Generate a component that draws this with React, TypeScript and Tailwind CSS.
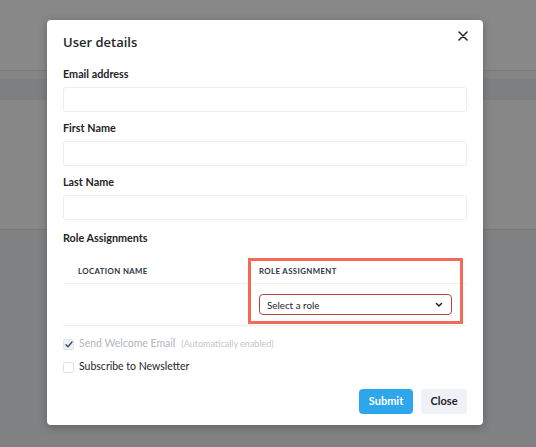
import React from 'react';

const font = { fontFamily: 'Lato, "Open Sans", sans-serif' };

function Field({ label }: { label: string }) {
  return (
    <div className="flex flex-col">
      <label className="text-[10.8px] font-bold text-[#1f2328] leading-[14px] mb-[6px]">{label}</label>
      <input className="h-[25px] w-full rounded-[3px] border border-[#eceef0] bg-white outline-none" />
    </div>
  );
}

export default function App() {
  return (
    <div className="relative h-[447px] w-[536px] overflow-hidden bg-[#868686]" style={font}>
      {/* page behind the overlay */}
      <div className="flex flex-col">
        <div className="h-[70px] bg-[#888888]" />
        <div className="h-px bg-[#7b7b7b]" />
        <div className="h-[8px] bg-[#858585]" />
        <div className="h-[21px] bg-[#7e7f81]" />
        <div className="h-[129px] bg-[#878787]" />
        <div className="h-px bg-[#777777]" />
        <div className="h-[217px] bg-[#808183]" />
      </div>

      {/* modal */}
      <div className="absolute left-[47px] top-[20px] w-[436px] h-[405px] rounded-[4px] bg-white px-[16px] shadow-[0_2px_8px_rgba(0,0,0,0.25)]">
        <div className="flex items-start justify-between pt-[12px]">
          <h2 className="text-[13px] font-semibold text-[#22262b] leading-[20px]" style={{ fontFamily: '"Open Sans", sans-serif' }}>User details</h2>
          <svg className="mt-[-1px] mr-[-1px]" width="10" height="10" viewBox="0 0 10 10" fill="none" stroke="#1f2328" strokeWidth="1.5" strokeLinecap="round">
            <path d="M1 1l8 8M9 1l-8 8" />
          </svg>
        </div>

        <div className="mt-[15px] flex flex-col gap-[9px]">
          <Field label="Email address" />
          <Field label="First Name" />
          <Field label="Last Name" />
        </div>

        <h3 className="mt-[11px] text-[10.8px] font-bold text-[#1f2328] leading-[14px]">Role Assignments</h3>

        <div className="mt-[11px]">
          <div className="grid grid-cols-[185px_1fr] border-b border-[#f0f1f3]">
            <div className="pl-[15px] pt-[9px] pb-[6px] text-[7.8px] leading-[12px] font-bold tracking-[0.05em] text-[#2b3444]">LOCATION NAME</div>
            <div className="pl-[11px] pt-[9px] pb-[6px] text-[7.8px] leading-[12px] font-bold tracking-[0.05em] text-[#2b3444]">ROLE ASSIGNMENT</div>
          </div>
          <div className="grid grid-cols-[185px_1fr] border-b border-[#f0f1f3]">
            <div />
            <div className="pl-[11px] pr-[15px] pt-[10px] pb-[10px]">
              <div className="flex h-[21px] shrink-0 items-center justify-between rounded-[4px] border-[1.5px] border-[#b1473f] pl-[7px] pr-[8px]">
                <span className="text-[9.8px] leading-[12px] text-[#1f2328]">Select a role</span>
                <svg width="8" height="6" viewBox="0 0 8 6" fill="none" stroke="#1f2328" strokeWidth="1.5" strokeLinecap="round" strokeLinejoin="round">
                  <path d="M1.5 1.5L4 4l2.5-2.5" />
                </svg>
              </div>
            </div>
          </div>
        </div>

        {/* highlight overlay */}
        <div className="pointer-events-none absolute left-[201px] top-[238px] h-[66px] w-[215px] border-[3px] border-[#f26a58]" />

        <div className="mt-[11px] flex flex-col gap-[9px]">
          <label className="flex h-[14px] items-center gap-[5px]">
            <span className="flex h-[11px] w-[11px] items-center justify-center rounded-[2px] border border-[#e2e5ea] bg-[#eef0f4]">
              <svg width="8" height="7" viewBox="0 0 8 7" fill="none" stroke="#3b4a66" strokeWidth="1.3" strokeLinecap="round" strokeLinejoin="round">
                <path d="M1 3.8l1.9 1.9L7 1" />
              </svg>
            </span>
            <span className="text-[10.5px] text-[#b4b7bc]">Send Welcome Email</span>
            <span className="ml-[1px] text-[9px] text-[#c3c6ca]">(Automatically enabled)</span>
          </label>
          <label className="flex h-[14px] items-center gap-[5px]">
            <span className="h-[11px] w-[11px] rounded-[2px] border border-[#dfe2e6] bg-white" />
            <span className="text-[10.5px] text-[#1f2328]">Subscribe to Newsletter</span>
          </label>
        </div>

        <div className="mt-[15px] flex justify-end gap-[8px]">
          <button className="h-[25px] w-[54px] rounded-[4px] bg-[#2ea6ec] text-[11px] font-bold text-white">Submit</button>
          <button className="h-[25px] w-[46px] rounded-[4px] bg-[#eef1f6] text-[11px] font-bold text-[#1f2328]">Close</button>
        </div>
      </div>
    </div>
  );
}
